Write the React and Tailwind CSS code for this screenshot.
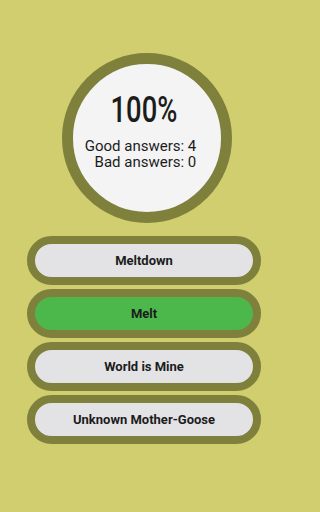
const OPTIONS = [
  { label: 'Meltdown', correct: false },
  { label: 'Melt', correct: true },
  { label: 'World is Mine', correct: false },
  { label: 'Unknown Mother-Goose', correct: false },
]

export default function App() {
  return (
    <div className="min-h-[512px] bg-[#d0ce6e]">
      <div
        className="w-[288px] h-[512px] flex flex-col items-center pt-[53px]"
        style={{ fontFamily: 'Roboto, "Liberation Sans", sans-serif' }}
      >
        <div className="ml-[6px] w-[170px] h-[170px] rounded-full border-[11px] border-[#7f803c] bg-[#f4f4f4] flex flex-col items-center pt-[28px] text-[#1c1c1c]">
          <p className="mr-[7px] text-[36px] leading-[36px] font-medium scale-x-[0.76]">100%</p>
          <div className="mr-[13px] mt-[10px] text-right text-[15px] leading-[16px]">
            <p>Good answers: 4</p>
            <p>Bad answers: 0</p>
          </div>
        </div>

        <div className="mt-[13px] w-full px-[27px] flex flex-col gap-[4px]">
          {OPTIONS.map(o => (
            <div
              key={o.label}
              className={`h-[49px] rounded-full border-[8px] border-[#7f803c] flex items-center justify-center text-[13px] font-bold text-[#1c1c1c] ${o.correct ? 'bg-[#4cb84c]' : 'bg-[#e3e3e5]'}`}
            >
              {o.label}
            </div>
          ))}
        </div>
      </div>
    </div>
  )
}
